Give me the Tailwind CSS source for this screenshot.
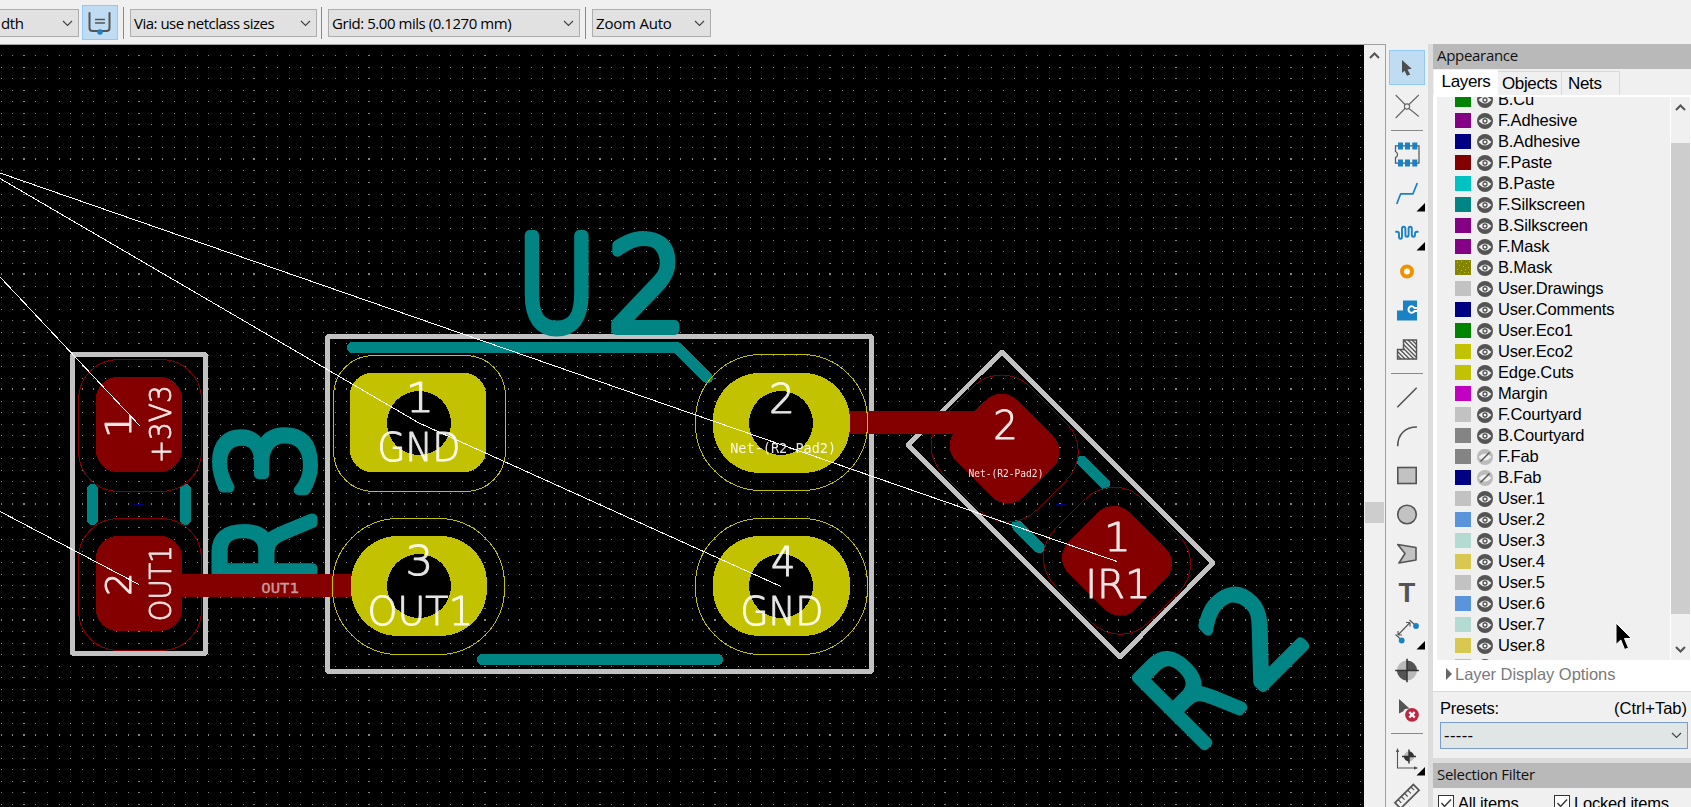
<!DOCTYPE html>
<html lang="en">
<head>
<meta charset="utf-8">
<title>PCB Editor</title>
<script src="https://cdn.jsdelivr.net/npm/@tailwindcss/browser@4"></script>
</head>
<body class="h-[807px] w-[1691px] overflow-hidden bg-[#f0f0f0] font-['Liberation_Sans',sans-serif] text-black">
<div class="flex h-full w-full flex-col">
  <!-- top toolbar -->
  <div class="flex h-[44px] w-full shrink-0 items-start pt-[9px] font-['Open_Sans',sans-serif] text-[15px]">
    <div class="flex h-[28px] w-[79px] items-center justify-between border border-l-0 border-[#adadad] bg-[#e1e1e1] pr-[5px] pl-px"><span class="whitespace-nowrap tracking-[-0.4px]">dth</span><svg width="11" height="7" viewBox="0 0 11 7" fill="none" stroke="#444" stroke-width="1.2"><path d="M1 1l4.500 4.500L10 1"/></svg></div>
    <div class="-mt-[4px] ml-[3px] flex h-[35px] w-[36px] items-center justify-center border border-[#90c8f6] bg-[#c0dcf3]"><svg width="24" height="24" viewBox="0 0 24 24" fill="none" stroke="#545454" stroke-width="2" stroke-linecap="round"><path d="M1.500 2v15q0 3 3 3h14q3 0 3-3V2" /><path d="M7.500 8.500h9M7.500 12h9" stroke-width="1.300"/><circle cx="12" cy="21" r="2.800" fill="#1a81c4" stroke="none"/></svg></div>
    <div class="-mt-[2px] ml-[5px] h-[32px] w-px bg-[#8a8a8a]"></div>
    <div class="ml-[6px] flex h-[28px] w-[187px] items-center justify-between border border-[#adadad] bg-[#e1e1e1] pr-[5px] pl-[3px]"><span class="whitespace-nowrap tracking-[-0.5px]">Via: use netclass sizes</span><svg width="11" height="7" viewBox="0 0 11 7" fill="none" stroke="#444" stroke-width="1.2"><path d="M1 1l4.500 4.500L10 1"/></svg></div>
    <div class="-mt-[2px] ml-[4px] h-[32px] w-px bg-[#8a8a8a]"></div>
    <div class="ml-[6px] flex h-[28px] w-[252px] items-center justify-between border border-[#adadad] bg-[#e1e1e1] pr-[5px] pl-[3px]"><span class="whitespace-nowrap tracking-[-0.45px]">Grid: 5.00 mils (0.1270 mm)</span><svg width="11" height="7" viewBox="0 0 11 7" fill="none" stroke="#444" stroke-width="1.2"><path d="M1 1l4.500 4.500L10 1"/></svg></div>
    <div class="-mt-[2px] ml-[5px] h-[32px] w-px bg-[#8a8a8a]"></div>
    <div class="ml-[6px] flex h-[28px] w-[119px] items-center justify-between border border-[#adadad] bg-[#e1e1e1] pr-[5px] pl-[3px]"><span class="whitespace-nowrap tracking-[-0.2px]">Zoom Auto</span><svg width="11" height="7" viewBox="0 0 11 7" fill="none" stroke="#444" stroke-width="1.2"><path d="M1 1l4.500 4.500L10 1"/></svg></div>
  </div>

  <div class="flex h-[763px] w-full">
    <!-- board canvas -->
    <div class="h-full w-[1364px] shrink-0 border-t border-[#a0a0a0] bg-black">
      <svg class="block" width="1364" height="762" viewBox="0 45 1364 762" shape-rendering="crispEdges">
        <path id="grid" fill="#848484"/>
        <g fill="none" stroke="#c2c2c2" stroke-width="4.600" stroke-linejoin="round">
          <rect x="72.500" y="354.500" width="133" height="299"/>
          <rect x="327.500" y="336.500" width="544" height="335"/>
          <path d="M1002 352L1213 563L1120 657L908 445Z"/>
        </g>
        <g fill="none" stroke="#008484" stroke-width="11" stroke-linecap="round" stroke-linejoin="round">
          <path d="M92.500 489.500v30M185.500 489.500v30"/>
          <path d="M352.500 347.500H677L707.500 378"/>
          <path d="M482.500 659.500H718"/>
          <path d="M1082 461l22.500 22.500M1017 525.500l22.500 22.500"/>
        </g>
        <g id="silk" fill="#008484" stroke="#008484" stroke-linejoin="round" stroke-linecap="round" shape-rendering="auto"></g>
        <g fill="#840000">
          <rect x="96" y="377" width="86" height="95" rx="22"/>
          <rect x="96" y="536" width="86" height="95" rx="22"/>
          <rect x="170" y="574" width="190" height="23"/>
          <path d="M840 411H980V434H840Z"/>
          <rect x="-47.500" y="-43" width="95" height="86" rx="22" transform="translate(1004.700 448.500) rotate(45)"/>
          <rect x="-47.500" y="-43" width="95" height="86" rx="22" transform="translate(1117 560.700) rotate(45)"/>
        </g>
        <g fill="none" stroke="#840000" stroke-width="1">
          <rect x="78.500" y="359.500" width="123" height="132" rx="40"/>
          <rect x="78.500" y="518.500" width="123" height="132" rx="40"/>
          <rect x="-66" y="-61.500" width="132" height="123" rx="40" transform="translate(1004.700 448.500) rotate(45)"/>
          <rect x="-66" y="-61.500" width="132" height="123" rx="40" transform="translate(1117 560.700) rotate(45)"/>
        </g>
        <g fill="#c2c200">
          <rect x="350" y="373" width="136" height="99" rx="22"/>
          <rect x="351" y="536" width="136" height="100" rx="47"/>
          <rect x="713" y="373" width="137" height="100" rx="47"/>
          <rect x="713" y="536" width="137" height="100" rx="47"/>
        </g>
        <g fill="none" stroke="#c2c200" stroke-width="1">
          <rect x="333.500" y="355.500" width="172" height="136" rx="40"/>
          <rect x="332.500" y="518.500" width="172" height="136" rx="66"/>
          <rect x="695.500" y="354.500" width="172" height="136" rx="66"/>
          <rect x="695.500" y="518.500" width="172" height="136" rx="66"/>
        </g>
        <g fill="#000">
          <circle cx="419" cy="423" r="32"/><circle cx="419" cy="586" r="32"/>
          <circle cx="781" cy="423" r="32"/><circle cx="781" cy="586" r="32"/>
        </g>
        <path d="M134 504.500h10M139.500 499v10M1056 504.500h10M1061.500 499v10" stroke="#000084" fill="none"/>
        <g id="labels" fill="#fff" stroke="#fff" stroke-linejoin="round" opacity=".9" shape-rendering="auto"></g>
        <g id="nets" fill="#c69a9a" stroke="#c69a9a" shape-rendering="auto"></g>
        <path d="M0 173L1117 561.500M0 178.500L419 423L781 586.500M0 277L140 426M0 511.500L139 584.500" fill="none" stroke="#fff" stroke-width="1"/>
      </svg>
    </div>

    <!-- canvas scrollbar -->
    <div class="flex h-full w-[22px] shrink-0 flex-col items-center border-t border-r border-[#a0a0a0] bg-[#f0f0f0]">
      <svg class="mt-[6px] shrink-0" width="11" height="9" viewBox="0 0 11 9" fill="none" stroke="#555" stroke-width="2"><path d="M1 7l4.500-4.500L10 7"/></svg>
      <div class="mt-[442px] h-[21px] w-[19px] bg-[#cdcdcd]"></div>
    </div>

    <!-- drawing tools -->
    <div class="flex h-full w-[42px] shrink-0 flex-col items-center overflow-hidden pt-[6px]" id="tools">
      <div class="mb-[2px] flex h-[35px] w-[36px] shrink-0 items-center justify-center border border-[#90c8f6] bg-[#c0dcf3]"><svg width="34" height="34" viewBox="-17 -17 34 34"><path d="M-5-8L4.700.8L.5 1.500L3.200 6.500L0 7.800L-2.500 2.700L-5 5Z" fill="#4d4d4d"/></svg></div>
      <svg class="h-[39px] w-[36px] shrink-0" viewBox="-18 -19.500 36 39" fill="none" stroke="#666" stroke-width="1.100"><path d="M-11.300-11.500L-2-2M11.800-11.500L2-2M-11.300 11.500L-2 2M11.800 10L2 2"/><circle r="2.600"/></svg>
      <div class="my-[4px] h-px w-[32px] shrink-0 bg-[#8a8a8a]"></div>
      <svg class="h-[39px] w-[36px] shrink-0" viewBox="-18 -19.500 36 39"><path d="M-11.500-8.700H12V8.700H-11.500V3q2-1 2-3t-2-3Z" fill="none" stroke="#545454" stroke-width="1.200"/><path d="M-9-12h5v7h-5zM-2-12h5v7h-5zM5.300-12h5v7h-5zM-9 5h5v7h-5zM-2 5h5v7h-5zM5.300 5h5v7h-5z" fill="#1a81c4"/></svg>
      <svg class="h-[39px] w-[36px] shrink-0" viewBox="-18 -19.500 36 39"><path d="M-10.300 10.500L-6.300.3H6L10.300-10.500" fill="none" stroke="#1a81c4" stroke-width="1.700" stroke-linejoin="round"/><path d="M18 9.500V18H9.500Z"/></svg>
      <svg class="h-[39px] w-[36px] shrink-0" viewBox="-18 -19.500 36 39"><path d="M-11.700-.7h1.700q2 0 2 2v3q0 2 1.500 2t1.500-2v-8q0-2 1.700-2t1.700 2v6q0 2 1.600 2t1.600-2v-6q0-2 1.600-2t1.600 2v6q0 2 1.600 2t1.600-2v-1q0-2 2-2h1.500" fill="none" stroke="#1a81c4" stroke-width="1.900"/><path d="M18 9.500V18H9.500Z"/></svg>
      <svg class="h-[39px] w-[36px] shrink-0" viewBox="-18 -19.500 36 39"><circle r="5" fill="#fff" stroke="#f29100" stroke-width="4"/></svg>
      <svg class="h-[39px] w-[36px] shrink-0" viewBox="-18 -19.500 36 39"><path d="M-10 0h6v-10H10V10H-10Z" fill="#1a81c4"/><path d="M10-2.500H7.500a3.200 3.200 0 1 0 0 3H10" fill="none" stroke="#fff" stroke-width="2"/></svg>
      <svg class="h-[39px] w-[36px] shrink-0" viewBox="-18 -19.500 36 39" fill="none" stroke="#545454" stroke-width="1.400"><path d="M-9.500 0h6v-9.500H9.500V9.500H-9.500Z"/><path d="M-3.500-9.500L9.500 3.500M1-9.500l8.500 8.500M5-9.500L9.500-5M-3.500-5L9.500 8M-3.500-1L7 9.500M-7 0L2.500 9.500M-9.500 2l7.500 7.500M-9.500 6L-6 9.500"/></svg>
      <div class="my-[4px] h-px w-[32px] shrink-0 bg-[#8a8a8a]"></div>
      <svg class="h-[39px] w-[36px] shrink-0" viewBox="-18 -19.500 36 39"><path d="M-9.700 9.700L9.700-9.700" stroke="#545454" stroke-width="1.600" fill="none"/></svg>
      <svg class="h-[39px] w-[36px] shrink-0" viewBox="-18 -19.500 36 39"><path d="M-9.300 9.700C-9.300-2-2-9.500 10-9.500" stroke="#545454" stroke-width="1.600" fill="none"/></svg>
      <svg class="h-[39px] w-[36px] shrink-0" viewBox="-18 -19.500 36 39"><rect x="-9.200" y="-8" width="18.400" height="16" stroke="#545454" stroke-width="1.600" fill="#c2c2c2"/></svg>
      <svg class="h-[39px] w-[36px] shrink-0" viewBox="-18 -19.500 36 39"><circle r="9.300" stroke="#545454" stroke-width="1.600" fill="#c2c2c2"/></svg>
      <svg class="h-[39px] w-[36px] shrink-0" viewBox="-18 -19.500 36 39"><path d="M-9.300-9L9-6V6.500L-8 9.500L-2 0Z" stroke="#545454" stroke-width="1.600" fill="#c2c2c2" stroke-linejoin="round"/></svg>
      <svg class="h-[39px] w-[36px] shrink-0" viewBox="-18 -19.500 36 39"><text x="0" y="9.800" text-anchor="middle" font-size="27.500" font-weight="700" fill="#545454">T</text></svg>
      <svg class="h-[39px] w-[36px] shrink-0" viewBox="-18 -19.500 36 39"><path d="M-9 3.500L3-9M-9 3.500v-4M-9 3.500h4M3-9v4M3-9h-4M2.500-11.500L8-6.500M-11.500 3L-6 8" stroke="#545454" stroke-width="1.100" fill="none"/><g fill="#1a81c4"><circle cx="9" cy="-5.500" r="2.900"/><circle cx="-5.300" cy="9" r="2.900"/></g><path d="M18 9.500V18H9.500Z"/></svg>
      <svg class="h-[39px] w-[36px] shrink-0" viewBox="-18 -19.500 36 39"><circle r="10" fill="#b9b9b9"/><path d="M0 0V-10A10 10 0 0 1 10 0ZM0 0V10A10 10 0 0 1-10 0Z" fill="#545454"/><path d="M-11.800 0H11.800M0-11.800V11.800" stroke="#333" stroke-width="1.500"/></svg>
      <svg class="h-[39px] w-[36px] shrink-0" viewBox="-18 -19.500 36 39"><path d="M-8-10.500L2.500-1L-2-.5L-4 2L-8 4Z" fill="#545454"/><circle cx="5" cy="5.300" r="6.900" fill="#bf2641"/><path d="M2.300 2.600L7.700 8M7.700 2.600L2.300 8" stroke="#fff" stroke-width="2.200"/></svg>
      <div class="my-[4px] h-px w-[32px] shrink-0 bg-[#8a8a8a]"></div>
      <svg class="h-[39px] w-[36px] shrink-0" viewBox="-18 -19.500 36 39"><path d="M-9.500-7V10.500H10" fill="none" stroke="#545454" stroke-width="1.100"/><path d="M-9.500-9.500l1.700 4h-3.400zM11 10.500l-4 1.700v-3.400z" fill="#545454"/><circle cx="2" cy="-1" r="5" fill="#b9b9b9"/><path d="M2-1V-6A5 5 0 0 1 7-1ZM2-1V4A5 5 0 0 1-3-1Z" fill="#333"/><path d="M-5-1H9M2-8V6" stroke="#333" stroke-width="1.400"/><path d="M18 9.500V18H9.500Z"/></svg>
      <svg class="h-[39px] w-[36px] shrink-0" viewBox="-18 -19.500 36 39"><g transform="rotate(-45)" fill="none" stroke="#545454" stroke-width="1.700"><rect x="-13" y="-4" width="26" height="8"/><path d="M-8.500-4v4.500M-4-4v4.500M.5-4v4.500M5-4v4.500M9.500-4v4.500" stroke-width="1.200"/></g></svg>
    </div>
    <div class="h-full w-[5px] shrink-0 bg-[#dcdcdc]"></div>

    <!-- side panels -->
    <div class="flex h-full w-[258px] shrink-0 flex-col">
      <div class="flex h-[25px] shrink-0 items-center bg-[#b9b9b9] pb-[2px] pl-[4px] font-['Open_Sans',sans-serif] text-[15px] tracking-[-0.3px] text-[#111]">Appearance</div>
      <div class="flex h-[26px] shrink-0 items-end pl-px text-[17px] tracking-[-0.35px]">
        <div class="flex h-[25px] w-[64px] items-center justify-center bg-white pb-px">Layers</div>
        <div class="flex h-[24px] w-[64px] items-center justify-center border-t border-r border-[#d9d9d9]">Objects</div>
        <div class="flex h-[24px] w-[58px] items-center border-t border-r border-[#d9d9d9] pl-[6px]">Nets</div>
      </div>
      <div class="flex h-[565px] shrink-0 bg-white pt-[2px] pl-[4px]">
        <div class="h-[563px] w-[233px] shrink-0 overflow-hidden bg-[#f0f0f0]"><div id="layers" class="-mt-[8px] flex flex-col pl-[18px]"></div></div>
        <div class="ml-px flex h-[563px] w-[19px] shrink-0 flex-col items-center bg-[#f0f0f0]">
          <svg class="mt-[6px] shrink-0" width="11" height="9" viewBox="0 0 11 9" fill="none" stroke="#555" stroke-width="2"><path d="M1 7l4.500-4.500L10 7"/></svg>
          <div class="mt-[31px] h-[471px] w-[19px] shrink-0 bg-[#cdcdcd]"></div>
          <svg class="mt-[31px] shrink-0" width="11" height="9" viewBox="0 0 11 9" fill="none" stroke="#555" stroke-width="2"><path d="M1 2l4.500 4.500L10 2"/></svg>
        </div>
      </div>
      <div class="flex h-[32px] shrink-0 items-center border-b border-[#d9d9d9] bg-white pb-[3px] pl-[13px] text-[16.500px] tracking-[-0.05px] text-[#7a7a7a]"><svg class="mr-[3px]" width="6" height="12" viewBox="0 0 6 12"><path d="M0 0L6 6L0 12Z" fill="#666"/></svg>Layer Display Options</div>
      <div class="flex h-[30px] shrink-0 items-end justify-between pr-[4px] pb-[1px] pl-[7px] text-[16.500px] tracking-[-0.2px]"><span>Presets:</span><span class="tracking-[0px]">(Ctrl+Tab)</span></div>
      <div class="mr-[3px] ml-[7px] flex h-[27px] shrink-0 items-center justify-between border border-[#7a9cc8] bg-[#e0e5e5] pr-[5px] pl-[3px] text-[16.500px] tracking-[0.4px]"><span>-----</span><svg width="11" height="7" viewBox="0 0 11 7" fill="none" stroke="#444" stroke-width="1.2"><path d="M1 1l4.500 4.500L10 1"/></svg></div>
      <div class="mt-[9px] h-[5px] shrink-0 bg-[#dcdcdc]"></div>
      <div class="flex h-[25px] shrink-0 items-center bg-[#b9b9b9] pb-[2px] pl-[4px] font-['Open_Sans',sans-serif] text-[15px] tracking-[-0.3px] text-[#111]">Selection Filter</div>
      <div class="flex h-[19px] shrink-0 items-start overflow-hidden pt-[6px] pl-[5px] text-[16.500px] leading-[18px] tracking-[-0.2px]">
        <svg class="mt-px mr-[4px] shrink-0" width="16" height="16" viewBox="0 0 16 16" fill="#fff" stroke="#333"><rect x=".5" y=".5" width="15" height="15"/><path d="M3.500 8l3 3.500L13 4.500" fill="none" stroke-width="1.400"/></svg><span class="w-[96px] shrink-0">All items</span>
        <svg class="mt-px mr-[4px] shrink-0" width="16" height="16" viewBox="0 0 16 16" fill="#fff" stroke="#333"><rect x=".5" y=".5" width="15" height="15"/><path d="M3.500 8l3 3.500L13 4.500" fill="none" stroke-width="1.400"/></svg><span class="shrink-0">Locked items</span>
      </div>
    </div>
  </div>
</div>
<!-- mouse pointer -->
<svg class="absolute top-[621px] left-[1614px]" width="20" height="32" viewBox="0 0 20 32"><path d="M2 2V23.500L6.800 19L10.600 28.500L14.500 27L10.500 17.500H17.500Z" fill="#000" stroke="#fff" stroke-width="1"/></svg>

<script>
const ns = 'http://www.w3.org/2000/svg';

// Grid dots; every tenth row and column is doubled.
const pitch = 11.517, origin = [24.45, 159.45];
let d = '';
for (let j = -10; j < 60; j++) {
  const major = j % 10 === 0, h = major ? 2 : 1;
  const y = Math.floor(origin[1] + j * pitch) - (major ? 1 : 0);
  for (let i = -3; i < 118; i++) {
    const mc = i % 10 === 0, w = mc ? 2 : 1;
    const x = Math.floor(origin[0] + i * pitch) - (mc ? 1 : 0);
    d += `M${x} ${y}h${w}v${h}h${-w}z`;
  }
}
document.getElementById('grid').setAttribute('d', d);

// Board texts: [text, baseline x, baseline y, length, cap height, rotation, stroke, weight, family]
const ctx = document.createElement('canvas').getContext('2d');
function place(group, items) {
  for (const [t, x, y, len, cap, rot, sw, wt, fam = 'DejaVu Sans'] of items) {
    ctx.font = `${wt} 100px "${fam}"`;
    const m = ctx.measureText(t), l = -m.actualBoundingBoxLeft, r = m.actualBoundingBoxRight;
    const sx = len / (r - l), sy = cap / 72.9;
    const e = document.createElementNS(ns, 'text');
    e.textContent = t;
    e.setAttribute('font-family', `${fam}, sans-serif`);
    e.setAttribute('font-size', 100);
    e.setAttribute('font-weight', wt);
    e.setAttribute('stroke-width', sw);
    e.setAttribute('vector-effect', 'non-scaling-stroke');
    e.setAttribute('transform', `translate(${x} ${y}) rotate(${rot}) scale(${sx} ${sy}) translate(${-l} 0)`);
    if (!sw) e.setAttribute('stroke', 'none');
    document.getElementById(group).appendChild(e);
  }
}
place('silk', [
  ['U', 529, 328.5, 56, 93, 0, 10, 200], ['2', 615, 330, 60, 92, 0, 10, 200],
  ['R', 312, 573, 56, 94.5, -90, 10, 200], ['3', 311, 491, 60, 92, -90, 10, 200],
  ['R', 1203.5, 745.5, 56, 94.5, -45, 10, 200], ['2', 1262, 688, 60, 93, -45, 10, 200]
]);
place('labels', [
  ['1', 410, 412, 19, 29.5, 0, 1, 200], ['GND', 380.5, 461, 77, 29, 0, 1, 200],
  ['3', 408.5, 575, 20.5, 29.5, 0, 1, 200], ['OUT1', 370.5, 624.5, 98, 29, 0, 1, 200],
  ['2', 771.500, 412.5, 19.500, 29.5, 0, 1, 200], ['Net-(R2-Pad2)', 731, 453, 102.5, 10.5, 0, 0, 400, 'DejaVu Sans Mono'],
  ['4', 772.5, 575.5, 20, 30, 0, 1, 200], ['GND', 743.5, 624.5, 77, 29, 0, 1, 200],
  ['2', 995.5, 438.5, 18.500, 29, 0, 1, 200], ['Net-(R2-Pad2)', 969, 476.5, 72.5, 7.5, 0, 0, 400, 'DejaVu Sans Mono'],
  ['1', 1108, 550.5, 18, 29, 0, 1, 200], ['IR1', 1090, 597.5, 56, 28.5, 0, 1, 200],
  ['1', 131, 434, 17.5, 26.5, -90, 1, 200], ['+3V3', 171, 460.5, 72.5, 21.5, -90, 0.8, 200],
  ['2', 131, 593.5, 17.5, 26.5, -90, 1, 200], ['OUT1', 171, 619, 70.5, 21.5, -90, 0.8, 200]
]);
place('nets', [['OUT1', 262, 592.5, 36, 10.5, 0, 0.4, 400, 'DejaVu Sans Mono']]);

// Layer rows: [name, colour, visible]
const layers = [
  ['B.Cu', '#008400', 1], ['F.Adhesive', '#840084', 1], ['B.Adhesive', '#000084', 1], ['F.Paste', '#840000', 1],
  ['B.Paste', '#00c2c2', 1], ['F.Silkscreen', '#008484', 1], ['B.Silkscreen', '#840084', 1], ['F.Mask', '#840084', 1],
  ['B.Mask', '#848400', 1], ['User.Drawings', '#c2c2c2', 1], ['User.Comments', '#000084', 1], ['User.Eco1', '#008400', 1],
  ['User.Eco2', '#c2c200', 1], ['Edge.Cuts', '#c2c200', 1], ['Margin', '#c200c2', 1], ['F.Courtyard', '#c2c2c2', 1],
  ['B.Courtyard', '#848484', 1], ['F.Fab', '#848484', 0], ['B.Fab', '#000084', 0], ['User.1', '#c2c2c2', 1],
  ['User.2', '#5994dc', 1], ['User.3', '#b4dbd2', 1], ['User.4', '#d8c852', 1], ['User.5', '#c2c2c2', 1],
  ['User.6', '#5994dc', 1], ['User.7', '#b4dbd2', 1], ['User.8', '#d8c852', 1], ['User.9', '#e8b298', 1]
];
const eye = '<circle cx="8" cy="8" r="8" fill="#545454"/><path d="M1.500 8Q8 1 14.500 8Q8 15 1.500 8Z" fill="#f0f0f0"/><circle cx="8" cy="8" r="2" fill="none" stroke="#545454" stroke-width="1.300"/>';
const off = '<circle cx="8" cy="8" r="8" fill="#bbb"/><path d="M1.500 8Q8 1 14.500 8Q8 15 1.500 8Z" fill="#f0f0f0"/><path d="M3.500 12.500L12.500 3.500" stroke="#545454" stroke-width="1.500"/>';
const speck = '<path d="M2 2h1v1H2zM6 1h1v1H6zM11 3h1v1h-1zM4 5h1v1H4zM8 6h1v1H8zM13 7h1v1h-1zM2 9h1v1H2zM6 10h1v1H6zM10 9h1v1h-1zM4 13h1v1H4zM9 12h1v1H9zM13 12h1v1h-1zM14 1h1v1h-1z" fill="#c2c200"/>';
document.getElementById('layers').innerHTML = layers.map(([n, c, v]) => `<div class="flex h-[21px] shrink-0 items-center whitespace-nowrap text-[16.500px] leading-[21px] tracking-[-0.15px]"><svg class="mr-[6px] shrink-0" width="16" height="15" viewBox="0 0 16 15" style="background:${c}">${n === 'B.Mask' ? speck : ''}</svg><svg class="mr-[5px] shrink-0" width="16" height="16" viewBox="0 0 16 16">${v ? eye : off}</svg>${n}</div>`).join('');
</script>
</body>
</html>
